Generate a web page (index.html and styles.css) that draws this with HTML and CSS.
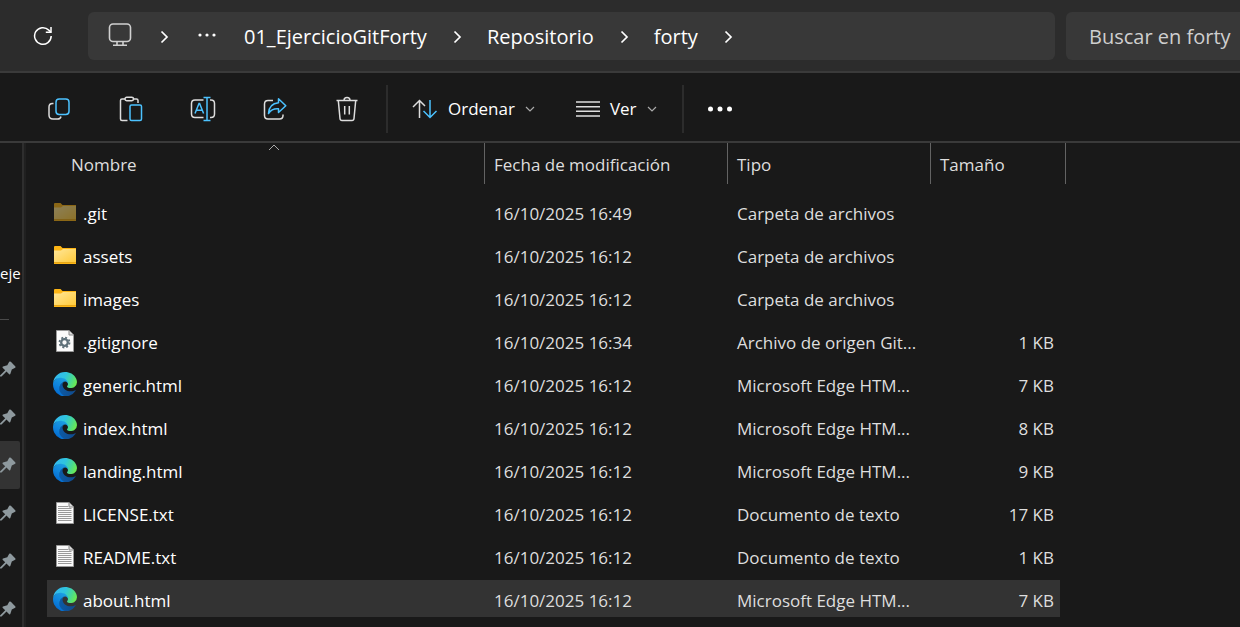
FILE: index.html
```html
<!DOCTYPE html>
<html lang="es">
<head>
<meta charset="utf-8">
<meta name="viewport" content="width=device-width, initial-scale=1">
<title>forty</title>
<link rel="stylesheet" href="styles.css">
</head>
<body>
<svg class="sprite" aria-hidden="true">
  <defs>
    <linearGradient id="folder-front" x1="0" y1="0" x2="1" y2="1"><stop offset="0" stop-color="#ffe79a"/><stop offset="1" stop-color="#ffc937"/></linearGradient>
    <linearGradient id="edge-dark" x1="0.1" y1="0.5" x2="1" y2="0.6"><stop offset="0" stop-color="#0c59a4"/><stop offset="1" stop-color="#114a8b"/></linearGradient>
    <linearGradient id="edge-blue" x1="0.7" y1="0.1" x2="0.3" y2="1"><stop offset="0" stop-color="#1b9de2"/><stop offset="0.5" stop-color="#0f83dc"/><stop offset="1" stop-color="#0067cf"/></linearGradient>
    <linearGradient id="edge-green" x1="0" y1="0.3" x2="1" y2="0.6"><stop offset="0" stop-color="#35b8f1"/><stop offset="0.45" stop-color="#2fc4df"/><stop offset="0.75" stop-color="#48d894"/><stop offset="1" stop-color="#6cea50"/></linearGradient>
    <symbol id="chevron" viewBox="0 0 12 14"><path d="M3.500 1.500 9 7 3.500 12.500" fill="none" stroke="#fff" stroke-width="1.700"/></symbol>
    <symbol id="caret" viewBox="0 0 10 6"><path d="M1 1 5 5 9 1" fill="none" stroke="#aaa" stroke-width="1.200"/></symbol>
    <symbol id="folder" viewBox="0 0 22 18"><path d="M0 1Q0 0 1 0H6.500L8.500 2H22V18H0Z" fill="#fdb515"/><path d="M0 4.500H7L9 3H22V17H0Z" fill="url(#folder-front)"/><path d="M0 16.500H22" stroke="#e8a817"/></symbol>
    <symbol id="config" viewBox="0 0 18 22"><path d="M.5.5H13L17.500 5V21.500H.5Z" fill="#fafafa" stroke="#999"/><path d="M13 .5V5H17.500" fill="#ddd" stroke="#888"/><circle cx="8.500" cy="12.500" r="3.300" fill="none" stroke="#5e7079" stroke-width="2.300"/><circle cx="8.500" cy="12.500" r="5" fill="none" stroke="#5e7079" stroke-width="1.800" stroke-dasharray="2 1.927"/></symbol>
    <symbol id="text" viewBox="0 0 18 22"><path d="M.5.5H13L17.500 5V21.500H.5Z" fill="#fafafa" stroke="#999"/><path d="M13 .5V5H17.500" fill="#ddd" stroke="#888"/><path d="M2 4.500H12M2 6.500H15.500M2 8.500H15.500M2 10.500H15.500M2 12.500H15.500M2 14.500H15.500M2 16.500H15.500M2 18.500H15.500" stroke="#999"/></symbol>
    <symbol id="edge" viewBox="0 0 256 256"><path fill="url(#edge-dark)" d="M235.700 195.400a98 98 0 0 1-10.400 4.700 101.400 101.400 0 0 1-35.700 6.400c-47 0-88-32.300-88-73.800a31.200 31.200 0 0 1 16.300-27.200c-42.500 1.800-53.500 46.100-53.500 72 0 73.500 67.700 81 82.300 81 7.800 0 19.600-2.300 26.700-4.500l1.300-.5a128.300 128.300 0 0 0 66.600-52.800 4 4 0 0 0-5.600-5.300z"/><path fill="url(#edge-blue)" d="M105.700 246.300A79.200 79.200 0 0 1 83 225a80.700 80.700 0 0 1 29.500-120c3.200-1.500 8.500-4.100 15.600-4a32.400 32.400 0 0 1 25.700 13 31.900 31.900 0 0 1 6.300 18.700c0-.2 24.500-79.600-80-79.600-43.900 0-80 41.700-80 78.200a130.200 130.200 0 0 0 12.100 56 128 128 0 0 0 156.400 67.100 75.500 75.500 0 0 1-62.800-8.100z"/><path fill="url(#edge-green)" d="M152.200 149c-.9 1-3.400 2.500-3.400 5.600 0 2.600 1.700 5.200 4.800 7.300 14.300 10 41.400 8.600 41.500 8.600a59.600 59.600 0 0 0 30.300-8.300 61.400 61.400 0 0 0 30.400-52.900c.3-22.400-8-37.300-11.300-43.900C223.500 23.900 177.700 0 128 0A128 128 0 0 0 0 126.200c.5-36.500 36.800-66 80-66 3.500 0 23.500.3 42 10a72.600 72.600 0 0 1 30.900 29.300c6.100 10.600 7.200 24.100 7.200 29.500s-2.700 13.300-8 20z"/></symbol>
    <symbol id="pin" viewBox="0 0 16 16"><path d="M9.200.8Q10 0 10.800.8L15.200 5.200Q16 6 15.200 6.700L11.800 8.600 10.300 13Q9.900 13.700 9.200 13.200L6.500 10.600 1.500 15.500H0V14.500L5.200 9.300 2.600 6.700Q2.200 6 3 5.500L7.300 4.200Z" fill="#8e999e"/></symbol>
  </defs>
</svg>

<header class="topbar">
  <button class="icon-button refresh" type="button" aria-label="Actualizar">
    <svg width="20" height="20" viewBox="0 0 20 20" fill="none" stroke="#fff" stroke-width="1.500"><path d="M18.200 10A8.300 8.300 0 1 1 15.800 4.100L17.800 6"/><path d="M18 1V6.200H12.800"/></svg>
  </button>
  <nav class="path" aria-label="Ruta">
    <button class="crumb device" type="button" aria-label="Este equipo">
      <svg width="24" height="24" viewBox="0 0 24 24" fill="none" stroke="#d0d0d0" stroke-width="1.600"><rect x="1.500" y="1" width="21" height="17.500" rx="3.500"/><path d="M9 18.500V22M15 18.500V22M5 22.300H19"/></svg>
    </button>
    <svg class="chevron"><use href="#chevron"/></svg>
    <button class="crumb more" type="button" aria-label="Más carpetas">
      <svg width="18" height="4" viewBox="0 0 18 4" fill="#fff"><circle cx="2" cy="2" r="1.600"/><circle cx="9" cy="2" r="1.600"/><circle cx="16" cy="2" r="1.600"/></svg>
    </button>
    <button class="crumb" type="button">01_EjercicioGitForty</button>
    <svg class="chevron"><use href="#chevron"/></svg>
    <button class="crumb" type="button">Repositorio</button>
    <svg class="chevron"><use href="#chevron"/></svg>
    <button class="crumb" type="button">forty</button>
    <svg class="chevron"><use href="#chevron"/></svg>
  </nav>
  <input class="search" type="text" aria-label="Buscar en forty" placeholder="Buscar en forty">
</header>

<div class="toolbar" role="toolbar" aria-label="Comandos">
  <button class="icon-button" type="button" aria-label="Copiar">
    <svg width="24" height="24" viewBox="0 0 24 24" fill="none" stroke-width="1.500"><path d="M6.500 6.500H5.500Q2 6.500 2 10V18Q2 22 6 22H10.500Q13.500 22 14 19.500" stroke="#ddd"/><rect x="9" y="2" width="13" height="15.500" rx="3.200" stroke="#4cc2ff"/></svg>
  </button>
  <button class="icon-button" type="button" aria-label="Pegar">
    <svg width="24" height="26" viewBox="0 0 24 26" fill="none" stroke-width="1.500"><path d="M6 3H3Q1.500 3 1.500 4.500V23Q1.500 24.500 3 24.500H8.500M14.500 3H17.500Q19 3 19 4.500V7" stroke="#ddd"/><rect x="6" y="1.200" width="8.500" height="3.500" rx="1.700" stroke="#ddd"/><rect x="11" y="9" width="11.500" height="15.500" rx="1.500" stroke="#4cc2ff"/></svg>
  </button>
  <button class="icon-button" type="button" aria-label="Cambiar nombre">
    <svg width="26" height="26" viewBox="0 0 26 26" fill="none" stroke-width="1.500"><path d="M13.500 4H5Q1.500 4 1.500 7.500V18Q1.500 21.500 5 21.500H13.500M20 4H21Q24.500 4 24.500 7.500V18Q24.500 21.500 21 21.500H20" stroke="#ddd"/><path d="M5 17.500 9 7.500H9.600L13.600 17.500M6.400 14.200H12.200M13.500 1.500H20.500M17 1.500V24.500M13.500 24.500H20.500" stroke="#4cc2ff"/></svg>
  </button>
  <button class="icon-button" type="button" aria-label="Compartir">
    <svg width="24" height="24" viewBox="0 0 24 24" fill="none" stroke-width="1.500"><path d="M10 3.500H5Q1.500 3.500 1.500 7V18.500Q1.500 22 5 22H16.500Q20 22 20 18.500V17.500" stroke="#ddd"/><path d="M15.500 1.700 22.800 8.800 15.500 15.500V11.800Q9 11.200 5.500 16.500 6 6.500 15.500 5.700Z" stroke="#4cc2ff" stroke-linejoin="round"/></svg>
  </button>
  <button class="icon-button" type="button" aria-label="Eliminar">
    <svg width="24" height="26" viewBox="0 0 24 26" fill="none" stroke="#ddd" stroke-width="1.500"><path d="M1.500 4.500H22.500M3.300 4.500 5 22.500Q5.200 24.500 7 24.500H17Q18.800 24.500 19 22.500L20.700 4.500M9 4.500Q9 1.500 12 1.500T15 4.500M9.700 10V18.500M14.300 10V18.500"/></svg>
  </button>
  <span class="divider"></span>
  <button class="menu-button" type="button">
    <svg width="26" height="20" viewBox="0 0 26 20" fill="none" stroke-width="1.500"><path d="M7.500 19V1.500M1 8 7.500 1.500 13 7" stroke="#ddd"/><path d="M18 1V18.500M11.500 12 18 18.500 24.500 12" stroke="#4cc2ff"/></svg>
    Ordenar
    <svg class="caret"><use href="#caret"/></svg>
  </button>
  <button class="menu-button view" type="button">
    <svg width="24" height="16" viewBox="0 0 24 16" stroke="#ddd" stroke-width="1.400"><path d="M0 1H24M0 5.700H24M0 10.300H24M0 15H24"/></svg>
    Ver
    <svg class="caret"><use href="#caret"/></svg>
  </button>
  <span class="divider"></span>
  <button class="icon-button options" type="button" aria-label="Ver más">
    <svg width="26" height="6" viewBox="0 0 26 6" fill="#fff"><circle cx="3.500" cy="3" r="2.500"/><circle cx="13" cy="3" r="2.500"/><circle cx="22.500" cy="3" r="2.500"/></svg>
  </button>
</div>

<div class="content">
  <aside class="sidebar" aria-label="Panel de navegación">
    <div class="account">eje</div>
    <ul class="pins">
      <li><svg><use href="#pin"/></svg></li>
      <li><svg><use href="#pin"/></svg></li>
      <li class="current"><svg><use href="#pin"/></svg></li>
      <li><svg><use href="#pin"/></svg></li>
      <li><svg><use href="#pin"/></svg></li>
      <li><svg><use href="#pin"/></svg></li>
    </ul>
  </aside>
  <main class="listing">
    <table class="files">
      <colgroup><col class="col-name"><col class="col-date"><col class="col-type"><col class="col-size"></colgroup>
      <thead>
        <tr>
          <th aria-sort="ascending"><button class="sort name" type="button">Nombre<svg class="sort-mark" viewBox="0 0 12 7"><path d="M1 6 6 1 11 6" fill="none" stroke="#aaa"/></svg></button></th>
          <th><button class="sort" type="button">Fecha de modificación</button></th>
          <th><button class="sort" type="button">Tipo</button></th>
          <th><button class="sort" type="button">Tamaño</button></th>
        </tr>
      </thead>
      <tbody>
        <tr><td><div class="file"><svg class="icon hidden-item"><use href="#folder"/></svg>.git</div></td><td>16/10/2025 16:49</td><td>Carpeta de archivos</td><td></td></tr>
        <tr><td><div class="file"><svg class="icon"><use href="#folder"/></svg>assets</div></td><td>16/10/2025 16:12</td><td>Carpeta de archivos</td><td></td></tr>
        <tr><td><div class="file"><svg class="icon"><use href="#folder"/></svg>images</div></td><td>16/10/2025 16:12</td><td>Carpeta de archivos</td><td></td></tr>
        <tr><td><div class="file"><svg class="icon page"><use href="#config"/></svg>.gitignore</div></td><td>16/10/2025 16:34</td><td>Archivo de origen Git...</td><td>1 KB</td></tr>
        <tr><td><div class="file"><svg class="icon app"><use href="#edge"/></svg>generic.html</div></td><td>16/10/2025 16:12</td><td>Microsoft Edge HTM...</td><td>7 KB</td></tr>
        <tr><td><div class="file"><svg class="icon app"><use href="#edge"/></svg>index.html</div></td><td>16/10/2025 16:12</td><td>Microsoft Edge HTM...</td><td>8 KB</td></tr>
        <tr><td><div class="file"><svg class="icon app"><use href="#edge"/></svg>landing.html</div></td><td>16/10/2025 16:12</td><td>Microsoft Edge HTM...</td><td>9 KB</td></tr>
        <tr><td><div class="file"><svg class="icon page"><use href="#text"/></svg>LICENSE.txt</div></td><td>16/10/2025 16:12</td><td>Documento de texto</td><td>17 KB</td></tr>
        <tr><td><div class="file"><svg class="icon page"><use href="#text"/></svg>README.txt</div></td><td>16/10/2025 16:12</td><td>Documento de texto</td><td>1 KB</td></tr>
        <tr class="hovered"><td><div class="file"><svg class="icon app"><use href="#edge"/></svg>about.html</div></td><td>16/10/2025 16:12</td><td>Microsoft Edge HTM...</td><td>7 KB</td></tr>
      </tbody>
    </table>
  </main>
</div>
</body>
</html>
```
FILE: styles.css
```css
* { box-sizing: border-box; }

body {
  margin: 0;
  min-height: 100vh;
  display: flex;
  flex-direction: column;
  overflow: hidden;
  background: #191919;
  color: #fff;
  font: 17px/24px "Open Sans", "Noto Sans", sans-serif;
}

button, input {
  margin: 0;
  padding: 0;
  border: 0;
  background: none;
  color: inherit;
  font: inherit;
}

svg { display: block; flex: none; }

.sprite { position: absolute; width: 0; height: 0; }

/* Address bar */
.topbar {
  display: flex;
  align-items: center;
  height: 73px;
  padding-left: 23px;
  background: #2c2c2c;
  border-bottom: 2px solid #3a3a3a;
  font-size: 20px;
}

.icon-button {
  display: grid;
  place-items: center;
  width: 40px;
  height: 40px;
}

.refresh { margin-right: 25px; }

.path {
  flex: 1;
  display: flex;
  align-items: center;
  gap: 23px;
  min-width: 0;
  height: 48px;
  margin-right: 11px;
  padding: 2px 0 0 20px;
  border-radius: 6px;
  background: #383838;
}

.crumb { white-space: nowrap; }
.path .device { padding: 0 2px 4px 0; }
.path .more { padding: 0 5px 4px 4px; }

.chevron { width: 12px; height: 14px; margin: 0 1px; }

.search {
  width: 174px;
  height: 48px;
  padding: 2px 0 0 23px;
  border-radius: 6px 0 0 6px;
  background: #383838;
}

.search::placeholder { color: #cfcfcf; opacity: 1; }

/* Command bar */
.toolbar {
  display: flex;
  align-items: center;
  height: 70px;
  padding: 4px 0 0 39px;
  border-bottom: 2px solid #3a3a3a;
}

.toolbar .icon-button + .icon-button { margin-left: 32px; }

.divider {
  width: 2px;
  height: 48px;
  margin: 0 24px 0 19px;
  background: #2c2c2c;
}

.menu-button {
  display: flex;
  align-items: center;
  gap: 10px;
}

.view { margin-left: 41px; }
.view + .divider { margin: 0 16px 0 25px; }
.caret { width: 10px; height: 6px; }

/* Navigation pane */
.content { flex: 1; display: flex; }

.sidebar {
  width: 26px;
  border-right: 2px solid #202020;
  box-shadow: inset -2px 0 #2e2e2e;
}

.account {
  display: flex;
  align-items: flex-end;
  height: 142px;
  font-size: 15px;
}

.pins {
  margin: 34px 0 0;
  padding: 0;
  list-style: none;
}

.pins::before {
  content: "";
  display: block;
  width: 9px;
  height: 25px;
  border-top: 1px solid #4a4a4a;
}

.pins li {
  display: flex;
  align-items: center;
  width: 20px;
  height: 48px;
}

.pins .current { background: #333; border-radius: 0 2px 2px 0; }
.pins svg { width: 16px; height: 16px; }

/* File list */
.listing { flex: 1; padding-left: 21px; }

.files {
  table-layout: fixed;
  width: 1019px;
  border-collapse: separate;
  border-spacing: 0;
  color: #dedede;
}

.col-name { width: 438px; }
.col-date { width: 243px; }
.col-type { width: 203px; }
.col-size { width: 135px; }

th { padding: 0 0 9px; font-weight: 400; }

.sort {
  position: relative;
  display: flex;
  align-items: center;
  width: 100%;
  height: 41px;
  padding: 2px 0 0 9px;
  border-right: 1px solid #636363;
}

.sort.name { padding-left: 24px; }

.sort-mark {
  position: absolute;
  top: 1px;
  left: 221px;
  width: 12px;
  height: 7px;
}

td {
  height: 43px;
  padding: 5px 0 0 9px;
  border-bottom: 6px solid transparent;
  background-clip: padding-box;
  white-space: nowrap;
}

td:first-child { padding-left: 7px; color: #fff; }

td:last-child {
  padding-right: 6px;
  border-right: 6px solid transparent;
  text-align: right;
}

.hovered td { background-color: #333; }

.file { display: flex; align-items: center; gap: 7px; }

.icon { width: 22px; height: 18px; margin: 0 0 4px; }
.icon.page { width: 18px; height: 22px; margin: 0 2px 4px; }
.icon.app { width: 24px; height: 24px; margin: 0 -1px 4px; }
.hidden-item { opacity: 0.5; }
```
